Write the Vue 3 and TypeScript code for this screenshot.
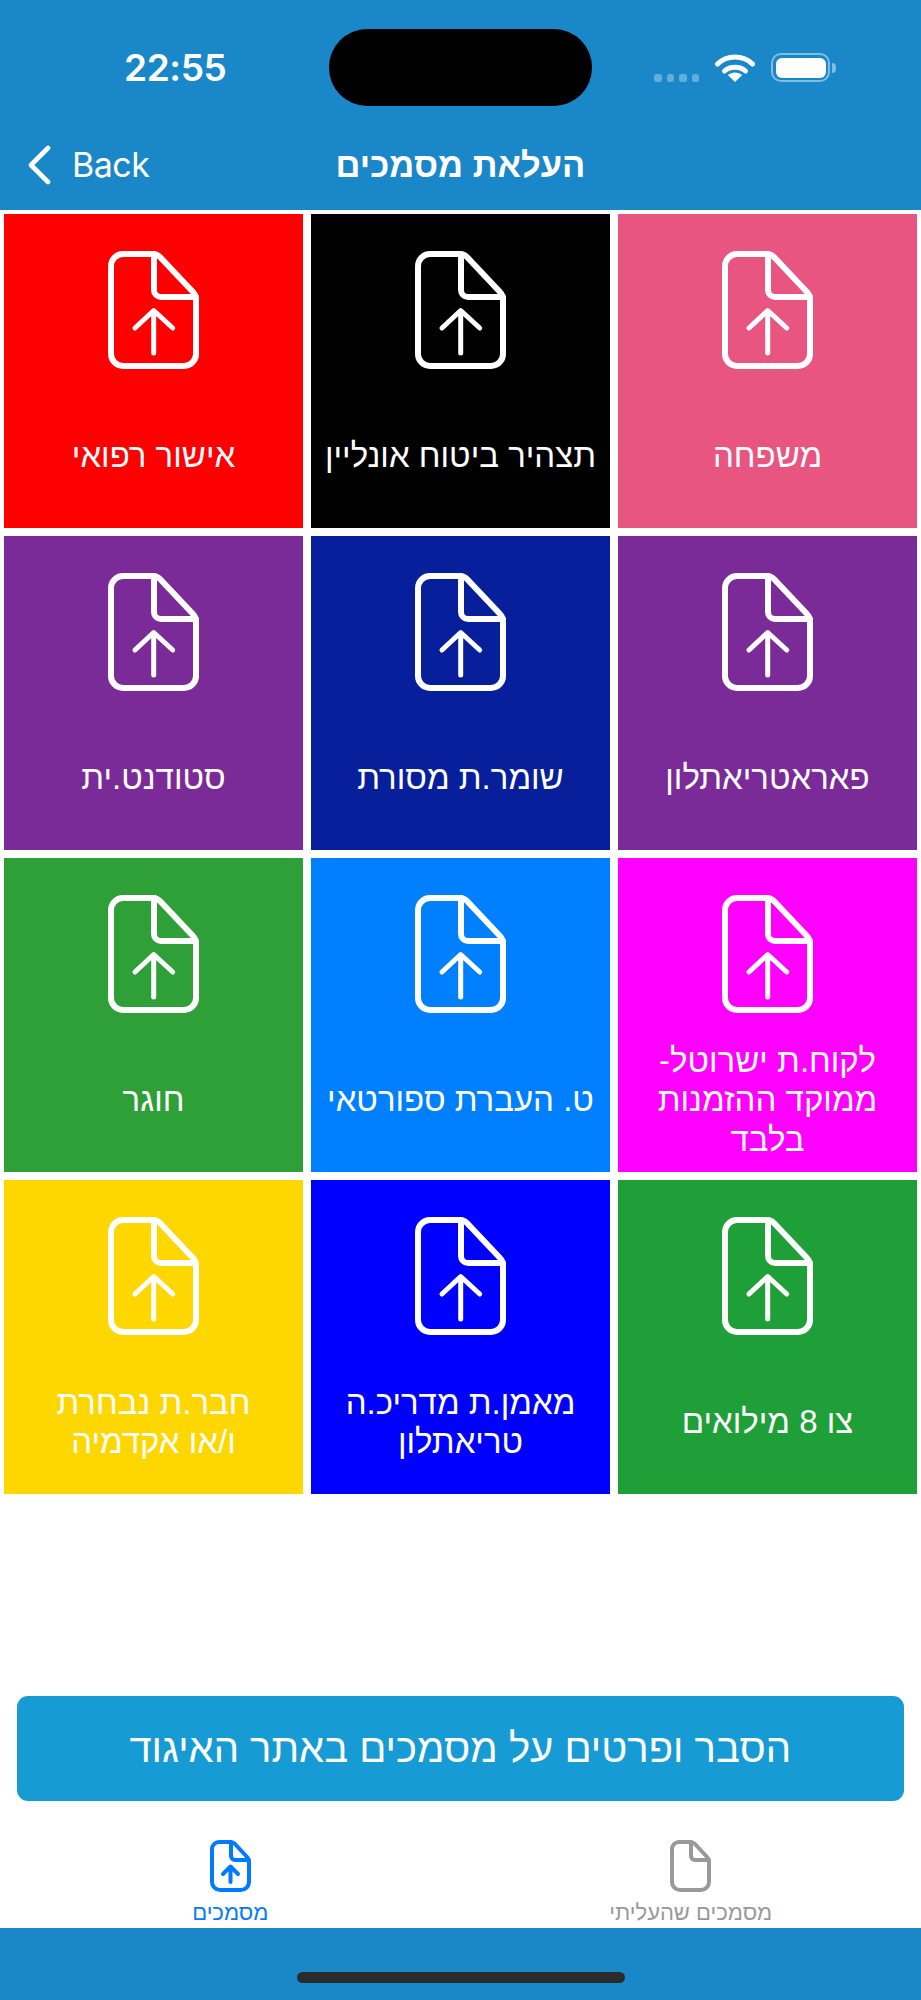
<script setup lang="ts">
interface Tile {
  label: string
  color: string
}

const tiles: Tile[] = [
  { label: 'משפחה', color: '#e85580' },
  { label: 'תצהיר ביטוח אונליין', color: '#000000' },
  { label: 'אישור רפואי', color: '#ff0000' },
  { label: 'פאראטריאתלון', color: '#7a2b97' },
  { label: 'שומר.ת מסורת', color: '#081f9c' },
  { label: 'סטודנט.ית', color: '#7a2b97' },
  { label: 'לקוח.ת ישרוטל-\nממוקד ההזמנות\nבלבד', color: '#ff00ff' },
  { label: 'ט. העברת ספורטאי', color: '#0080ff' },
  { label: 'חוגר', color: '#2f9f37' },
  { label: 'צו 8 מילואים', color: '#1e9f38' },
  { label: 'מאמן.ת מדריכ.ה\nטריאתלון', color: '#0000ff' },
  { label: 'חבר.ת נבחרת\nו/או אקדמיה', color: '#ffd700' },
]
</script>

<template>
  <div class="screen">
    <header class="header">
      <div class="status">
        <span class="time">22:55</span>
        <span class="island"></span>
        <div class="signal">
          <i></i><i></i><i></i><i></i>
        </div>
        <svg class="wifi" viewBox="0 0 40 29" width="40" height="29" fill="none">
          <path d="M2.5 11C12 1.5 28 1.5 37.5 11" stroke="#fff" stroke-width="5" stroke-linecap="round" />
          <path d="M9.5 18C15 13 25 13 30.5 18" stroke="#fff" stroke-width="5" stroke-linecap="round" />
          <path d="M20 29L12.8 22C17 18.5 23 18.5 27.2 22Z" fill="#fff" />
        </svg>
        <div class="battery">
          <span class="battery-body"><span class="battery-fill"></span></span>
          <span class="battery-nub"></span>
        </div>
      </div>
      <nav class="nav">
        <div class="back">
          <svg viewBox="0 0 24 40" width="24" height="40" fill="none">
            <path d="M21 3L4 20L21 37" stroke="#fff" stroke-width="4.6" stroke-linecap="round" stroke-linejoin="round" />
          </svg>
          <span class="back-text">Back</span>
        </div>
        <h1 class="title">העלאת מסמכים</h1>
        <div></div>
      </nav>
    </header>

    <main class="main">
      <div class="grid">
        <div v-for="tile in tiles" :key="tile.label" class="tile" :style="{ backgroundColor: tile.color }">
          <svg class="doc" viewBox="0 0 91 118" width="91" height="118" fill="none" stroke="#fff" stroke-width="6" stroke-linecap="round" stroke-linejoin="round">
            <path d="M15 3H45Q49 3 52 6L85 41Q88 44 88 49V103A12 12 0 0 1 76 115H15A12 12 0 0 1 3 103V15A12 12 0 0 1 15 3Z" />
            <path d="M46 3V39A7 7 0 0 0 53 46H88" />
            <path d="M45.7 102V60M27 77L45.7 59.5L64.7 77" stroke-width="5" />
          </svg>
          <div class="label"><span>{{ tile.label }}</span></div>
        </div>
      </div>
    </main>

    <div class="cta">הסבר ופרטים על מסמכים באתר האיגוד</div>

    <div class="tabs">
      <div class="tab tab-active">
        <svg viewBox="0 0 41 52" width="41" height="52" fill="none" stroke="#007aff" stroke-width="4" stroke-linecap="round" stroke-linejoin="round">
          <path d="M9 2H20Q23 2 25 4L37 17Q39 19 39 22V42A8 8 0 0 1 31 50H10A8 8 0 0 1 2 42V9A7 7 0 0 1 9 2Z" />
          <path d="M21 2V16A4 4 0 0 0 25 20H39" />
          <path d="M20.5 42V27M13 34L20.5 26.5L28 34" />
        </svg>
        <span>מסמכים</span>
      </div>
      <div class="tab">
        <svg viewBox="0 0 41 52" width="41" height="52" fill="none" stroke="#999" stroke-width="4" stroke-linecap="round" stroke-linejoin="round">
          <path d="M9 2H20Q23 2 25 4L37 17Q39 19 39 22V42A8 8 0 0 1 31 50H10A8 8 0 0 1 2 42V9A7 7 0 0 1 9 2Z" />
          <path d="M21 2V16A4 4 0 0 0 25 20H39" />
        </svg>
        <span>מסמכים שהעליתי</span>
      </div>
    </div>

    <footer class="footer">
      <span class="home"></span>
    </footer>
  </div>
</template>

<style>
html,
body {
  margin: 0;
  background: #fff;
}
</style>

<style scoped>
.screen {
  width: 921px;
  height: 2000px;
  display: flex;
  flex-direction: column;
  background: #fff;
  font-family: "Liberation Sans", Arial, sans-serif;
  color: #fff;
}

.header {
  height: 210px;
  flex: none;
  background: #1a87c9;
  display: flex;
  flex-direction: column;
}

.status {
  height: 135px;
  display: flex;
  align-items: center;
  padding-left: 124px;
  box-sizing: border-box;
}

.time {
  width: 205px;
  font-family: Inter, sans-serif;
  font-size: 37px;
  font-weight: 600;
  letter-spacing: -0.4px;
}

.island {
  width: 263px;
  height: 77px;
  border-radius: 38px;
  background: #000;
  margin-right: 62px;
}

.signal {
  display: flex;
  gap: 5px;
  align-self: flex-end;
  margin-bottom: 53px;
  margin-right: 16px;
}

.signal i {
  width: 7.5px;
  height: 8px;
  border-radius: 2.5px;
  background: rgba(255, 255, 255, 0.32);
}

.wifi {
  margin-right: 16px;
}

.battery {
  display: flex;
  align-items: center;
  gap: 2px;
}

.battery-body {
  width: 59px;
  height: 29px;
  box-sizing: border-box;
  border: 2px solid rgba(255, 255, 255, 0.45);
  border-radius: 10px;
  display: flex;
  align-items: center;
  justify-content: center;
}

.battery-fill {
  width: 50px;
  height: 20px;
  border-radius: 6px;
  background: #fff;
}

.battery-nub {
  width: 4px;
  height: 10px;
  border-radius: 0 4px 4px 0;
  background: rgba(255, 255, 255, 0.45);
}

.nav {
  height: 60px;
  display: grid;
  grid-template-columns: 1fr auto 1fr;
  align-items: center;
  padding: 0 27px;
}

.back {
  display: flex;
  align-items: center;
  gap: 21px;
  font-family: Inter, sans-serif;
  font-size: 34px;
  letter-spacing: -0.5px;
}

.back-text {
  margin-bottom: 2px;
}

.title {
  margin: 0;
  font-size: 34.5px;
  font-weight: 700;
  direction: rtl;
}

.main {
  flex: 1;
}

.grid {
  direction: rtl;
  padding: 4px;
  display: grid;
  grid-template-columns: repeat(3, 1fr);
  grid-auto-rows: 314px;
  gap: 8px;
}

.tile {
  display: flex;
  flex-direction: column;
  align-items: center;
  padding-top: 37px;
  box-sizing: border-box;
}

.doc {
  flex: none;
}

.label {
  flex: 1;
  display: flex;
  align-items: center;
  justify-content: center;
  padding: 15px 4px 0;
  text-align: center;
  font-size: 33px;
  line-height: 39.5px;
  white-space: pre-line;
}

.cta {
  margin: 0 17.5px 0 17px;
  height: 105px;
  flex: none;
  display: flex;
  align-items: center;
  justify-content: center;
  border-radius: 11px;
  background: #169bd5;
  font-size: 40px;
  direction: rtl;
}

.tabs {
  height: 127px;
  flex: none;
  display: grid;
  grid-template-columns: 1fr 1fr;
  padding-top: 39px;
  box-sizing: border-box;
}

.tab {
  display: flex;
  flex-direction: column;
  align-items: center;
  gap: 8px;
  color: #999;
  font-size: 22px;
  direction: rtl;
}

.tab-active {
  color: #007aff;
}

.footer {
  height: 72px;
  flex: none;
  background: #1a87c9;
  display: flex;
  justify-content: center;
  padding-top: 44px;
  box-sizing: border-box;
}

.home {
  width: 328px;
  height: 11px;
  border-radius: 6px;
  background: #2b2b2b;
}
</style>
